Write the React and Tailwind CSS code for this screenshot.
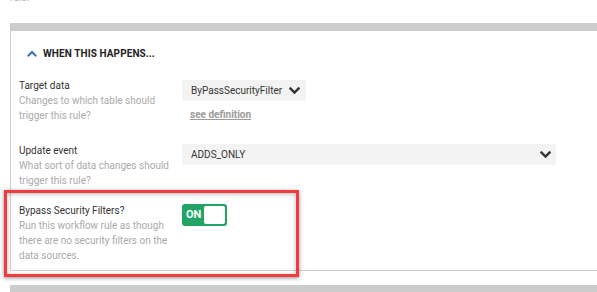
import React from "react";

function ChevronDown({ className }) {
  return (
    <svg className={className} width="11" height="8" viewBox="0 0 11 8" fill="none">
      <path d="M1.5 1.5 L5.5 5.5 L9.5 1.5" stroke="#333" strokeWidth="2.4" strokeLinecap="square" />
    </svg>
  );
}

function ChevronUp() {
  return (
    <svg width="10" height="7" viewBox="0 0 10 7" fill="none">
      <path d="M1.5 5.5 L5 2 L8.5 5.5" stroke="#3d6fb0" strokeWidth="2" strokeLinecap="square" />
    </svg>
  );
}

export default function App() {
  return (
    <div
      className="relative w-[597px] h-[292px] overflow-hidden bg-white text-[10px]"
      style={{ fontFamily: "Roboto, 'Noto Sans', sans-serif" }}
    >
      <div className="h-[23px] overflow-hidden">
        <div className="mt-[-8px] pl-[10px] leading-[12px] text-[#b5b5b5]">rule.</div>
      </div>

      <div className="ml-[10px] w-[600px] border-t-[8px] border-l border-b border-[#cccccc] border-b-[#cfcfcf]">
        <div className="flex items-center h-[20px] mt-[12px] pl-[16px]">
          <ChevronUp />
          <span className="ml-[6px] font-bold text-[#222] tracking-[0.1px]">WHEN THIS HAPPENS...</span>
        </div>

        {/* Row 1 */}
        <div className="flex mt-[16px]">
          <div className="w-[171px] pl-[8px] pr-[6px]">
            <div className="leading-[14px] text-[#333]">Target data</div>
            <div className="leading-[15px] text-[#aaaaaa]">Changes to which table should trigger this rule?</div>
          </div>
          <div className="pt-[1px]">
            <div className="flex items-center justify-between w-[124px] h-[21px] rounded-[2px] bg-[#f3f3f3] pl-[9px] pr-[6px] text-[#333]">
              <span>ByPassSecurityFilter</span>
              <ChevronDown />
            </div>
            <div className="mt-[7px] pl-[8px] leading-[14px] font-bold text-[#9a9a9a] underline">see definition</div>
          </div>
        </div>

        {/* Row 2 */}
        <div className="flex mt-[21px]">
          <div className="w-[171px] pl-[8px] pr-[6px]">
            <div className="leading-[14px] text-[#333]">Update event</div>
            <div className="leading-[15px] text-[#aaaaaa]">What sort of data changes should trigger this rule?</div>
          </div>
          <div>
            <div className="flex items-center justify-between w-[374px] h-[21px] rounded-[2px] bg-[#f3f3f3] pl-[9px] pr-[5px] text-[#333]">
              <span>ADDS_ONLY</span>
              <ChevronDown />
            </div>
          </div>
        </div>

        {/* Row 3 */}
        <div className="flex mt-[16px] pb-[7px]">
          <div className="w-[171px] pl-[8px] pr-[6px]">
            <div className="leading-[14px] text-[#333]">Bypass Security Filters?</div>
            <div className="leading-[15px] text-[#aaaaaa]">Run this workflow rule as though there are no security filters on the data sources.</div>
          </div>
          <div>
            <div className="flex items-center justify-between w-[45px] h-[22px] rounded-[3px] bg-[#22a466] p-[2px]">
              <span className="pl-[2px] font-bold text-white text-[11px]">ON</span>
              <div className="w-[21px] h-[18px] rounded-[2px] bg-white" />
            </div>
          </div>
        </div>
      </div>

      <div className="ml-[10px] mt-[14px] w-[600px] border-t-[8px] border-[#cccccc] h-[20px]" />

      <div className="absolute left-[4px] top-[190px] w-[295px] h-[87px] border-[3px] border-[#f03c3e] shadow-[0_1px_4px_rgba(0,0,0,0.45),inset_0_1px_4px_rgba(0,0,0,0.3)]" />
    </div>
  );
}
